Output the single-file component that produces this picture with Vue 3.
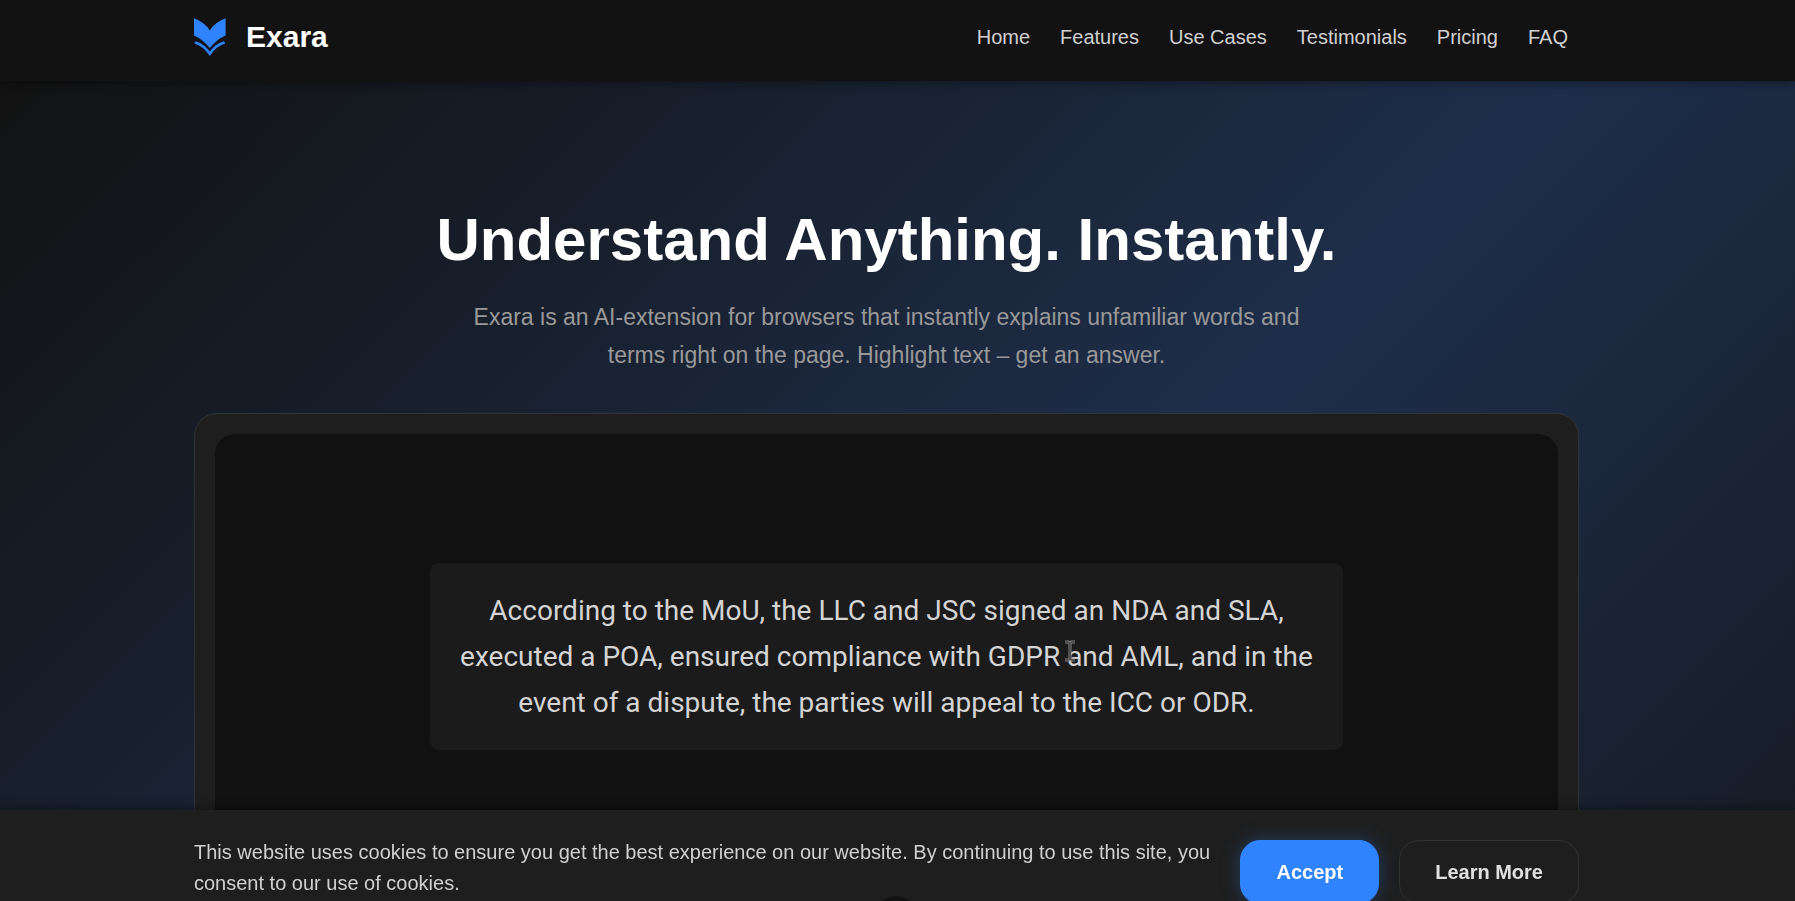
<script setup>
const links = [
  { label: 'Home', href: '#home' },
  { label: 'Features', href: '#features' },
  { label: 'Use Cases', href: '#use-cases' },
  { label: 'Testimonials', href: '#testimonials' },
  { label: 'Pricing', href: '#pricing' },
  { label: 'FAQ', href: '#faq' },
]
const demoLines = [
  'According to the MoU, the LLC and JSC signed an NDA and SLA,',
  'executed a POA, ensured compliance with GDPR and AML, and in the',
  'event of a dispute, the parties will appeal to the ICC or ODR.',
]
</script>

<template>
  <div class="page">
    <header class="header">
      <div class="container header-row">
        <a class="brand" href="#home">
          <svg class="logo" viewBox="0 0 32 38" aria-hidden="true">
            <path d="M0 0.300Q10.500 4 15.800 12.600Q21.100 4 31.600 0.300V17.400Q23 21 15.800 30Q8.600 21 0 17.400Z" fill="#2f83ff" />
            <path d="M2 24.800Q9.500 27 15.800 35.800Q22 27 29.600 24.800" fill="none" stroke="#2f83ff" stroke-width="2.600" stroke-linecap="round" />
          </svg>
          <span>Exara</span>
        </a>
        <nav class="nav">
          <a v-for="link in links" :key="link.label" :href="link.href">{{ link.label }}</a>
        </nav>
      </div>
    </header>

    <main id="home" class="hero">
      <div class="container">
        <h1>Understand Anything. Instantly.</h1>
        <p class="lead">
          Exara is an AI-extension for browsers that instantly explains unfamiliar words and
          terms right on the page. Highlight text – get an answer.
        </p>
        <section class="card">
          <div class="screen">
            <div class="quote">
              <p><span v-for="line in demoLines" :key="line">{{ line }}</span></p>
              <svg class="caret" viewBox="0 0 12 22" aria-hidden="true">
                <path d="M1 2H4.500L6 3.500L7.500 2H11M6 3.500V18.500M1 20H4.500L6 18.500L7.500 20H11" fill="none" stroke="#8a8a8a" stroke-width="3" />
                <path d="M1 2H4.500L6 3.500L7.500 2H11M6 3.500V18.500M1 20H4.500L6 18.500L7.500 20H11" fill="none" stroke="#1b1b1b" stroke-width="1" />
              </svg>
            </div>
          </div>
        </section>
      </div>
    </main>

    <aside class="cookies" aria-label="Cookie notice">
      <div class="container cookies-row">
        <p>
          This website uses cookies to ensure you get the best experience on our website. By
          continuing to use this site, you consent to our use of cookies.
        </p>
        <div class="actions">
          <button type="button" class="btn primary">Accept</button>
          <button type="button" class="btn">Learn More</button>
        </div>
      </div>
      <span class="knob"></span>
    </aside>
  </div>
</template>

<style>
body {
  margin: 0;
  background: #121212;
}
</style>

<style scoped>
* {
  box-sizing: border-box;
}
.page {
  --gutter: 22px;
  height: 100vh;
  overflow: hidden;
  font-family: "Liberation Sans", Arial, sans-serif;
  font-size: 20px;
  color: #d0d0d0;
}
.container {
  max-width: 1385px;
  margin: 0 auto;
}
.header {
  position: relative;
  z-index: 1;
  padding: 17px var(--gutter) 24px 0;
  background: #121212;
  box-shadow: 0 2px 10px rgba(0, 0, 0, 0.4);
}
.header-row {
  display: flex;
  align-items: center;
  justify-content: space-between;
  height: 40px;
}
.brand {
  display: flex;
  align-items: center;
  gap: 20px;
  font-size: 30px;
  font-weight: 700;
  color: #fff;
  text-decoration: none;
}
.logo {
  width: 32px;
  height: 38px;
}
.nav {
  display: flex;
  gap: 30px;
  padding-right: 11px;
}
.nav a {
  color: #d0d0d0;
  text-decoration: none;
}
.hero {
  min-height: 1340px;
  padding: 123px var(--gutter) 0 0;
  background: linear-gradient(135deg, #121212 0%, #1e2e4a 50%, #121212 100%);
  text-align: center;
}
h1 {
  margin: 0 0 22px;
  font-size: 60px;
  line-height: 72px;
  color: #fff;
}
.lead {
  max-width: 880px;
  margin: 0 auto 39px;
  font-size: 23px;
  line-height: 38px;
  color: #999;
}
.card {
  padding: 20px;
  border: 1px solid #333;
  border-radius: 23px;
  background: #1e1e1e;
}
.screen {
  display: flex;
  align-items: flex-start;
  justify-content: center;
  aspect-ratio: 16 / 9;
  padding-top: 129px;
  border-radius: 20px;
  background: #111;
}
.quote {
  position: relative;
  width: 68%;
  padding: 25px 0 24px;
  border-radius: 9px;
  background: #1b1b1b;
}
.quote p {
  margin: 0;
  font-family: Roboto, Inter, sans-serif;
  font-size: 28px;
  line-height: 46px;
  color: #d4d4d4;
}
.quote span {
  display: block;
  white-space: nowrap;
}
.caret {
  position: absolute;
  left: calc(70% - 5px);
  top: 77px;
  width: 12px;
  height: 22px;
}
.cookies {
  position: fixed;
  z-index: 2;
  left: 0;
  right: 0;
  bottom: -6px;
  padding: 27px var(--gutter) 0 0;
  background: #1e1e1e;
  box-shadow: 0 -2px 10px rgba(0, 0, 0, 0.4);
}
.cookies-row {
  display: flex;
  align-items: center;
  justify-content: space-between;
  gap: 20px;
}
.cookies p {
  margin: 0;
  padding-bottom: 8px;
  line-height: 31px;
}
.actions {
  display: flex;
  flex-shrink: 0;
  gap: 20px;
}
.btn {
  height: 64px;
  padding: 0 35px;
  border: 1px solid #333;
  border-radius: 20px;
  background: transparent;
  font-family: inherit;
  font-size: 20px;
  font-weight: 700;
  color: #e0e0e0;
}
.primary {
  border-color: #2f83ff;
  background: #2f83ff;
  color: #fff;
  box-shadow: 0 0 20px rgba(47, 131, 255, 0.3);
}
.knob {
  position: absolute;
  left: 50%;
  bottom: -31px;
  width: 42px;
  height: 42px;
  margin-left: -23px;
  border-radius: 50%;
  background: #111;
}
</style>
